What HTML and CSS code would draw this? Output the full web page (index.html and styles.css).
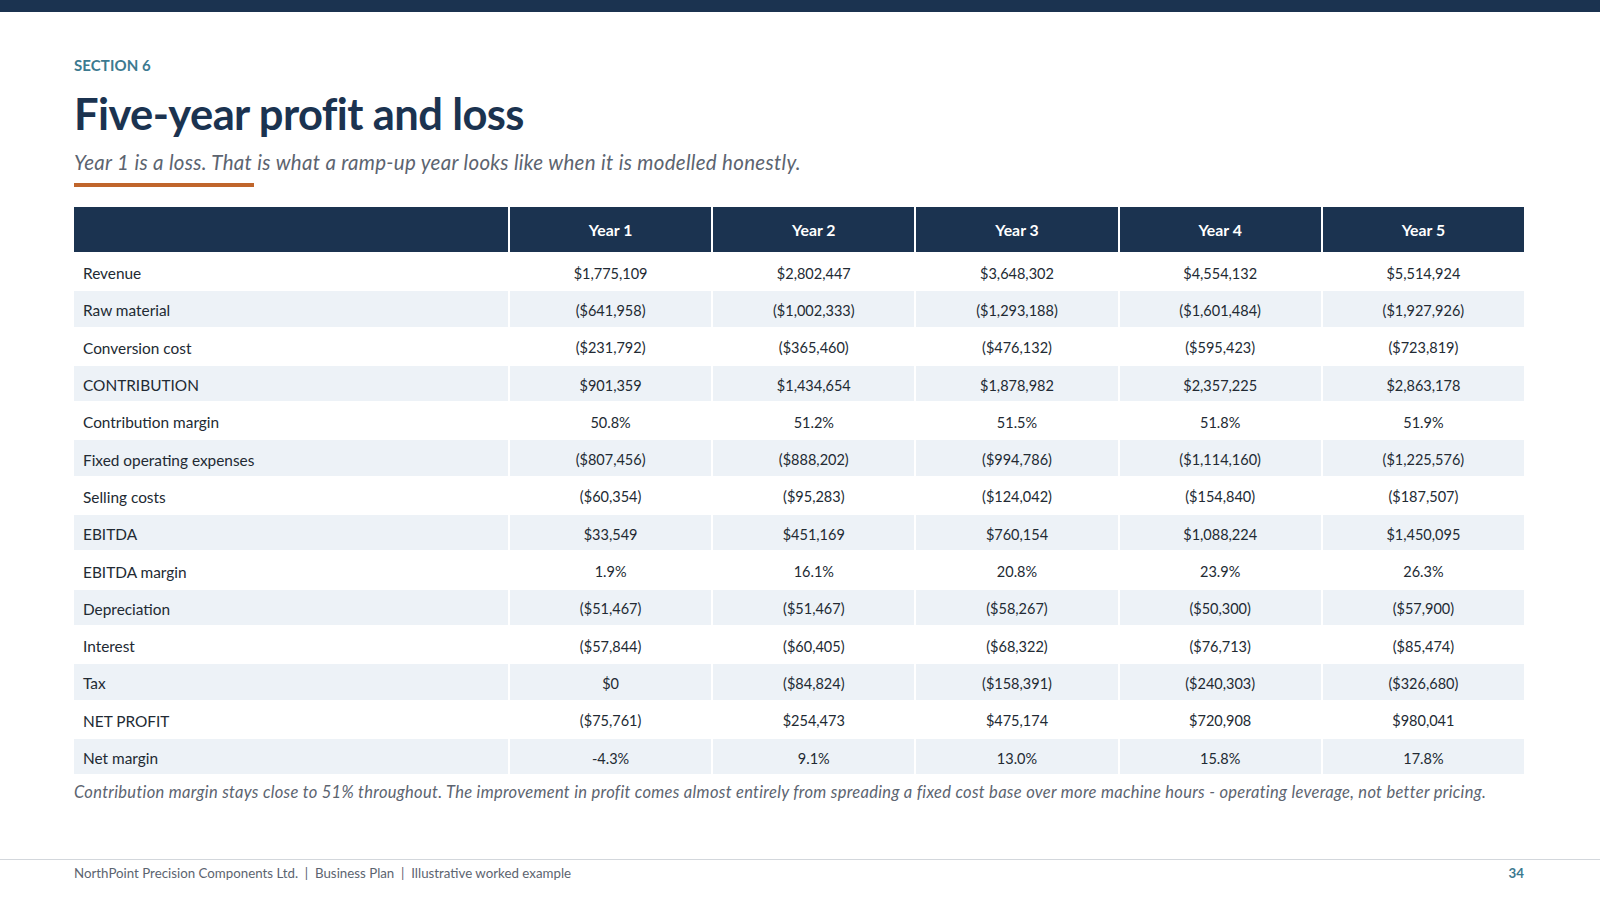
FILE: index.html
```html
<!DOCTYPE html>
<html lang="en">
<head>
<meta charset="utf-8">
<title>Five-year profit and loss</title>
<link rel="stylesheet" href="styles.css">
</head>
<body>
<div class="slide">
  <div class="topbar"></div>
  <main class="content">
    <div class="eyebrow">SECTION 6</div>
    <h1 class="title">Five-year profit and loss</h1>
    <p class="subtitle">Year 1 is a loss. That is what a ramp-up year looks like when it is modelled honestly.</p>
    <div class="accent"></div>
    <table class="pl">
      <thead>
        <tr><th class="label"></th><th>Year 1</th><th>Year 2</th><th>Year 3</th><th>Year 4</th><th>Year 5</th></tr>
      </thead>
      <tbody>
        <tr><td class="label">Revenue</td><td>$1,775,109</td><td>$2,802,447</td><td>$3,648,302</td><td>$4,554,132</td><td>$5,514,924</td></tr>
        <tr><td class="label">Raw material</td><td>($641,958)</td><td>($1,002,333)</td><td>($1,293,188)</td><td>($1,601,484)</td><td>($1,927,926)</td></tr>
        <tr><td class="label">Conversion cost</td><td>($231,792)</td><td>($365,460)</td><td>($476,132)</td><td>($595,423)</td><td>($723,819)</td></tr>
        <tr><td class="label">CONTRIBUTION</td><td>$901,359</td><td>$1,434,654</td><td>$1,878,982</td><td>$2,357,225</td><td>$2,863,178</td></tr>
        <tr><td class="label">Contribution margin</td><td>50.8%</td><td>51.2%</td><td>51.5%</td><td>51.8%</td><td>51.9%</td></tr>
        <tr><td class="label">Fixed operating expenses</td><td>($807,456)</td><td>($888,202)</td><td>($994,786)</td><td>($1,114,160)</td><td>($1,225,576)</td></tr>
        <tr><td class="label">Selling costs</td><td>($60,354)</td><td>($95,283)</td><td>($124,042)</td><td>($154,840)</td><td>($187,507)</td></tr>
        <tr><td class="label">EBITDA</td><td>$33,549</td><td>$451,169</td><td>$760,154</td><td>$1,088,224</td><td>$1,450,095</td></tr>
        <tr><td class="label">EBITDA margin</td><td>1.9%</td><td>16.1%</td><td>20.8%</td><td>23.9%</td><td>26.3%</td></tr>
        <tr><td class="label">Depreciation</td><td>($51,467)</td><td>($51,467)</td><td>($58,267)</td><td>($50,300)</td><td>($57,900)</td></tr>
        <tr><td class="label">Interest</td><td>($57,844)</td><td>($60,405)</td><td>($68,322)</td><td>($76,713)</td><td>($85,474)</td></tr>
        <tr><td class="label">Tax</td><td>$0</td><td>($84,824)</td><td>($158,391)</td><td>($240,303)</td><td>($326,680)</td></tr>
        <tr><td class="label">NET PROFIT</td><td>($75,761)</td><td>$254,473</td><td>$475,174</td><td>$720,908</td><td>$980,041</td></tr>
        <tr><td class="label">Net margin</td><td>-4.3%</td><td>9.1%</td><td>13.0%</td><td>15.8%</td><td>17.8%</td></tr>
      </tbody>
    </table>
    <p class="note">Contribution margin stays close to 51% throughout. The improvement in profit comes almost entirely from spreading a fixed cost base over more machine hours - operating leverage, not better pricing.</p>
  </main>
  <footer class="footer">
    <span class="footer-text">NorthPoint Precision Components Ltd.&nbsp; |&nbsp; Business Plan&nbsp; |&nbsp; Illustrative worked example</span>
    <span class="page">34</span>
  </footer>
</div>
</body>
</html>
```
FILE: styles.css
```css
* { box-sizing: border-box; }
html, body { margin: 0; padding: 0; background: #ffffff; }
body { font-family: Lato, "Open Sans", "Liberation Sans", sans-serif; color: #222a33; }

.slide {
  width: 1600px;
  height: 900px;
  display: flex;
  flex-direction: column;
  overflow: hidden;
}
.topbar { height: 12px; background: #1b3350; flex: none; }

.content {
  flex: 1;
  padding: 46px 76px 0 74px;
  display: flex;
  flex-direction: column;
}

.eyebrow {
  font-size: 15px;
  font-weight: 700;
  color: #3c7a90;
  line-height: 15px;
  letter-spacing: 0.1px;
}
.title {
  margin: 16px 0 0;
  font-size: 43.5px;
  line-height: 48px;
  font-weight: 700;
  color: #1b3350;
  letter-spacing: -0.6px;
}
.subtitle {
  margin: 13px 0 0;
  font-size: 20.5px;
  line-height: 24px;
  font-style: italic;
  color: #5c6470;
  letter-spacing: 0.3px;
}
.accent {
  width: 180px;
  height: 4px;
  background: #c0652b;
  margin-top: 9px;
}

.pl {
  margin: 18px -2px 0 -2px;
  width: 1454px;
  border-collapse: separate;
  border-spacing: 2px;
  table-layout: fixed;
  font-size: 14.5px;
}
.pl th, .pl td {
  text-align: center;
  padding: 0 9px;
  white-space: nowrap;
}
.pl th {
  background: #1b3350;
  color: #ffffff;
  font-weight: 700;
  height: 45px;
  font-size: 15.8px;
}
.pl th.label { width: 434px; }
.pl td { height: 35.3px; padding-top: 3px; color: #222a33; }
.pl td.label { text-align: left; font-size: 15.4px; }
.pl tbody tr:nth-child(even) td { background: #edf2f7; }

.note {
  margin: 6px 0 0;
  font-size: 16.5px;
  font-style: italic;
  color: #5c6470;
  line-height: 20px;
  letter-spacing: 0.3px;
}

.footer {
  flex: none;
  height: 41px;
  border-top: 1px solid #d3d7dc;
  padding: 5px 76px 0 74px;
  display: flex;
  justify-content: space-between;
  align-items: flex-start;
  font-size: 13.3px;
  color: #5c6470;
  line-height: 16px;
}
.page { font-weight: 700; color: #3c7a90; }
```
